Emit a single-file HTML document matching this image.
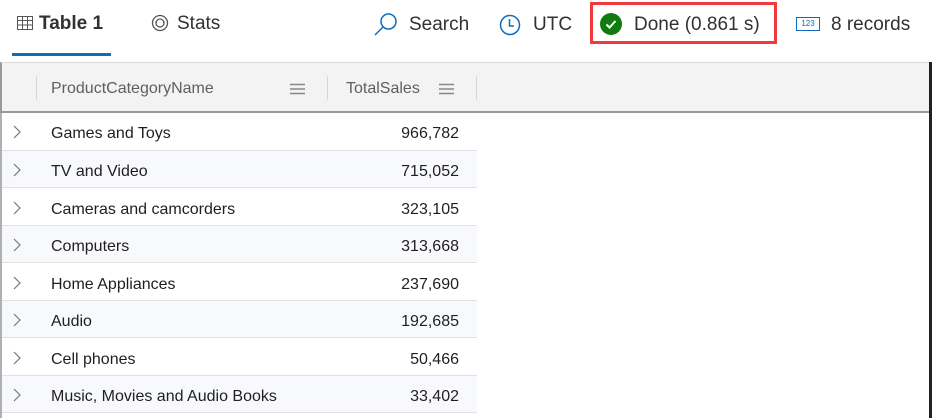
<!DOCTYPE html>
<html><head><meta charset="utf-8"><style>
*{margin:0;padding:0;box-sizing:border-box}
body{width:932px;height:418px;overflow:hidden;background:#fff;font-family:"Liberation Sans",sans-serif;color:#323130;position:relative}
.a{position:absolute;white-space:nowrap}
.top{font-size:19px;color:#323130}
.row{position:absolute;left:2px;width:475px;height:38px;border-bottom:1px solid #e1e1e1;font-size:16px;color:#201f1e}
.row.alt{background:#f7f9fc;border-top:1px solid #e1e1e1}
.row .n{position:absolute;left:49px;top:12px}
.row .v{position:absolute;right:18px;top:12px}
.row svg{position:absolute;left:11px;top:12px}
</style></head><body>
<svg class="a" style="left:17px;top:16px" width="16" height="14" viewBox="0 0 16 14"><g fill="none" stroke="#555" stroke-width="1"><rect x="0.5" y="0.5" width="15" height="13"/><path d="M0.5 4.5H15.5M0.5 9H15.5M5.5 0.5V13.5M10.5 0.5V13.5"/></g></svg>
<div class="a top" style="left:39px;top:13px;font-weight:bold;color:#323130">Table 1</div>
<div class="a" style="left:12px;top:53px;width:99px;height:3px;background:#0f6cbd"></div>
<svg class="a" style="left:151px;top:14px" width="18" height="18" viewBox="0 0 18 18"><g fill="none" stroke="#555" stroke-width="1.3"><circle cx="9" cy="9" r="7.5"/><circle cx="9" cy="9" r="4"/></g></svg>
<div class="a top" style="left:177px;top:13px">Stats</div>
<svg class="a" style="left:373px;top:12px" width="26" height="26" viewBox="0 0 26 26"><g fill="none" stroke="#0f6cbd" stroke-width="1.5"><circle cx="15.5" cy="9.5" r="7.5"/><path d="M10 15L2 23"/></g></svg>
<div class="a top" style="left:409px;top:14px">Search</div>
<svg class="a" style="left:499px;top:14px" width="22" height="22" viewBox="0 0 22 22"><g fill="none" stroke="#0f6cbd" stroke-width="1.5"><circle cx="11" cy="11" r="9.5"/><path d="M10.5 5V12H15"/></g></svg>
<div class="a top" style="left:533px;top:14px">UTC</div>
<div class="a" style="left:590px;top:2px;width:187px;height:42px;border:3px solid #f03a3e"></div>
<svg class="a" style="left:600px;top:13px" width="22" height="22" viewBox="0 0 22 22"><circle cx="11" cy="11" r="11" fill="#107c10"/><path d="M6.5 11.5L9.5 14.5L15.5 8" fill="none" stroke="#fff" stroke-width="2"/></svg>
<div class="a top" style="left:634px;top:14px">Done (0.861 s)</div>
<div class="a" style="left:796px;top:17px;width:24px;height:14px;border:1.5px solid #0f6cbd;font-size:8px;color:#0f6cbd;text-align:center;line-height:11px">123</div>
<div class="a top" style="left:831px;top:14px">8 records</div>
<div class="a" style="left:0;top:62px;width:932px;height:51px;background:#f3f3f3;border-top:1px solid #d8d8d8;border-bottom:2px solid #999;border-left:2px solid #999"></div>
<div class="a" style="left:36px;top:76px;width:1px;height:24px;background:#d6d6d6"></div>
<div class="a" style="left:327px;top:76px;width:1px;height:24px;background:#d6d6d6"></div>
<div class="a" style="left:476px;top:76px;width:1px;height:24px;background:#d6d6d6"></div>
<div class="a" style="left:51px;top:80px;font-size:16px;color:#605e5c">ProductCategoryName</div>
<div class="a" style="left:346px;top:80px;font-size:16px;color:#605e5c">TotalSales</div>
<svg class="a" style="left:290px;top:83px" width="15" height="12"><path d="M0 1.5H15M0 6H15M0 10.5H15" stroke="#888" stroke-width="1.5"/></svg>
<svg class="a" style="left:439px;top:83px" width="15" height="12"><path d="M0 1.5H15M0 6H15M0 10.5H15" stroke="#888" stroke-width="1.5"/></svg>
<div class="a" style="left:0;top:113px;width:2px;height:305px;background:#b0b0b0"></div>
<div class="row" style="top:113px"><svg width="8" height="14"><path d="M1 1L7 7L1 13" fill="none" stroke="#777" stroke-width="1.2"/></svg><span class="n">Games and Toys</span><span class="v">966,782</span></div>
<div class="row alt" style="top:150px"><svg width="8" height="14"><path d="M1 1L7 7L1 13" fill="none" stroke="#777" stroke-width="1.2"/></svg><span class="n">TV and Video</span><span class="v">715,052</span></div>
<div class="row" style="top:189px"><svg width="8" height="14"><path d="M1 1L7 7L1 13" fill="none" stroke="#777" stroke-width="1.2"/></svg><span class="n">Cameras and camcorders</span><span class="v">323,105</span></div>
<div class="row alt" style="top:225px"><svg width="8" height="14"><path d="M1 1L7 7L1 13" fill="none" stroke="#777" stroke-width="1.2"/></svg><span class="n">Computers</span><span class="v">313,668</span></div>
<div class="row" style="top:264px"><svg width="8" height="14"><path d="M1 1L7 7L1 13" fill="none" stroke="#777" stroke-width="1.2"/></svg><span class="n">Home Appliances</span><span class="v">237,690</span></div>
<div class="row alt" style="top:300px"><svg width="8" height="14"><path d="M1 1L7 7L1 13" fill="none" stroke="#777" stroke-width="1.2"/></svg><span class="n">Audio</span><span class="v">192,685</span></div>
<div class="row" style="top:339px"><svg width="8" height="14"><path d="M1 1L7 7L1 13" fill="none" stroke="#777" stroke-width="1.2"/></svg><span class="n">Cell phones</span><span class="v">50,466</span></div>
<div class="row alt" style="top:375px"><svg width="8" height="14"><path d="M1 1L7 7L1 13" fill="none" stroke="#777" stroke-width="1.2"/></svg><span class="n">Music, Movies and Audio Books</span><span class="v">33,402</span></div>
<div class="a" style="left:929px;top:62px;width:3px;height:356px;background:#222"></div>
</body></html>
